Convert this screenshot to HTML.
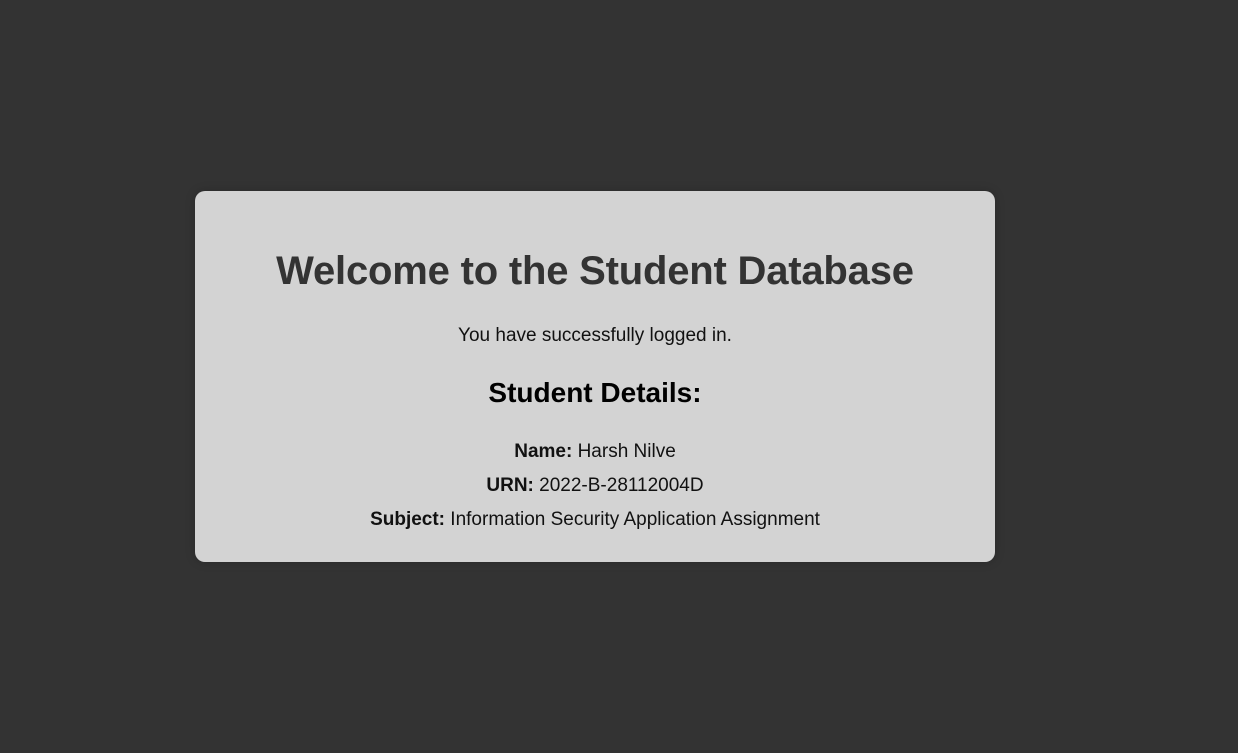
<!DOCTYPE html>
<html><head><meta charset="utf-8"><style>
html,body{margin:0;padding:0;width:1238px;height:753px;background:#333333;overflow:hidden;font-family:"Liberation Sans",sans-serif;}
.card{position:absolute;left:195px;top:191px;width:800px;height:371px;background:#d3d3d3;border-radius:10px;box-shadow:0 0 10px rgba(0,0,0,0.2);text-align:center;}
.t{position:absolute;left:0;width:800px;white-space:nowrap;}
h1{margin:0;font-size:40px;font-weight:bold;color:#333;letter-spacing:-0.2px}
.p{font-size:19px;color:#111;}
h2{margin:0;font-size:28px;font-weight:bold;color:#000;}
</style></head><body>
<div class="card">
<h1 class="t" style="top:58px">Welcome to the Student Database</h1>
<div class="t p" style="top:134px">You have successfully logged in.</div>
<h2 class="t" style="top:186px">Student Details:</h2>
<div class="t p" style="top:250px"><b>Name:</b> Harsh Nilve</div>
<div class="t p" style="top:284px"><b>URN:</b> 2022-B-28112004D</div>
<div class="t p" style="top:318px"><b>Subject:</b> Information Security Application Assignment</div>
</div>
</body></html>
